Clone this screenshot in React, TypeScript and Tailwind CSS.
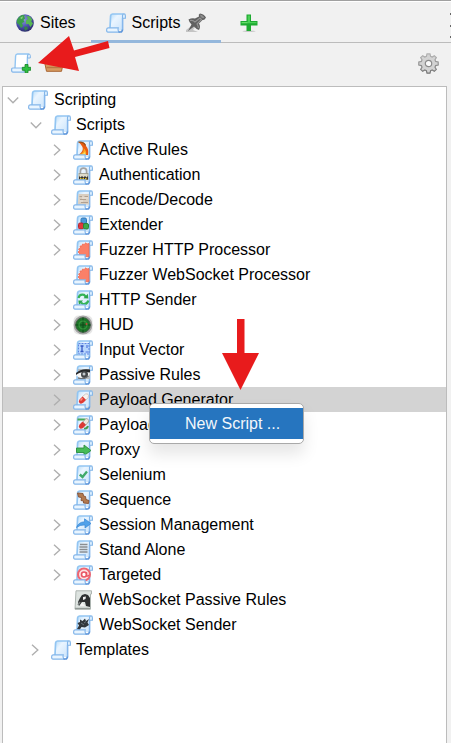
import { useState, type ReactNode } from "react";

/* A parchment scroll; children are painted on the sheet. */
function Scroll({ children }: { children?: ReactNode }) {
  return (
    <svg viewBox="0 0 20 20" className="size-5 shrink-0" aria-hidden="true">
      <defs>
        <linearGradient id="sheet" x1="0" y1="0" x2="1" y2="1">
          <stop offset="0" stopColor="#b4dbf9" />
          <stop offset="0.35" stopColor="#eaf5ff" />
          <stop offset="1" stopColor="#cbe4fb" />
        </linearGradient>
      </defs>
      <path d="M4 17L5 1H17V17Z" fill="url(#sheet)" />
      <path d="M4 15L4.6 2.8Q4.8 1 6.5 1H17.5" fill="none" stroke="#92c5f2" strokeWidth="1.7" />
      <path d="M16.5 5V2.6Q16.6 .9 18 .9Q19.4 .9 19.4 2.8V5.2H16.5" fill="#dff0fe" stroke="#82b5e8" strokeWidth="1.1" />
      <path d="M16.6 5V17.5" stroke="#86b7ec" strokeWidth="1.6" />
      {children}
      <path d="M2 14.9H12.2Q11.4 17.4 13 19.2H2Q.6 19.2 .6 17Q.6 14.9 2 14.9Z" fill="#e9f5ff" stroke="#84b6ea" strokeWidth="1.2" />
      <path d="M12.5 19.1H14.6Q16.3 19 16.4 16.6" fill="none" stroke="#5d95da" strokeWidth="1.5" />
    </svg>
  );
}

function Globe() {
  return (
    <svg viewBox="0 0 18 18" className="size-[18px]" aria-hidden="true">
      <defs>
        <radialGradient id="ocean" cx=".4" cy=".3" r=".7">
          <stop offset="0" stopColor="#93a0e0" />
          <stop offset=".6" stopColor="#4a51ad" />
          <stop offset="1" stopColor="#2d2d6e" />
        </radialGradient>
      </defs>
      <circle cx="9" cy="9" r="8.8" fill="url(#ocean)" />
      <path d="M1 6Q3 1.8 6.5 1L9 1.3 8 3 9.5 4 7.5 6 8.5 8 6 9 7 12 5 14 3 10.5.8 9Z" fill="#3c9d4b" />
      <path d="M10.5 2L14 2.5 16.5 6 15 7 17 9.5 14.5 13 12.5 10 10 10 10 6.5 12 5Z" fill="#58b652" />
      <path d="M8 13L11 12.5 12 15 9 16.8Z" fill="#35814a" />
      <path d="M4 4L7 2.3 6 5Z" fill="#91d783" />
    </svg>
  );
}

function Pin() {
  return (
    <svg viewBox="0 0 20 20" className="size-5" aria-hidden="true">
      <path d="M0 19V17L8 11 10 13 7 17 12 19Z" fill="#c4c4c4" />
      <path d="M2.500 6.500Q6 4.500 9 5.500L13 3.500Q12 1.500 14 .500 18 1 20 4.500 18.500 7.500 16.500 7L13 10.500Q15 13.500 13 17 10 16 8 13.500L2 18 5.500 11.500Q3 9 2.500 6.500Z" fill="#606060" />
      <path d="M4 7.500Q7 7 9 9L14 5 15.500 6.500 11 11Q12.500 13 12.300 15" fill="none" stroke="#949494" strokeWidth="1.2" />
      <path d="M14 1.500Q17.500 2 18.500 5L16.500 5.300Q14 4.300 14 1.500Z" fill="#8e8e8e" />
    </svg>
  );
}

function Plus() {
  return (
    <svg viewBox="0 0 18 18" className="size-[18px]" aria-hidden="true">
      <ellipse cx="9" cy="17.2" rx="6.500" ry=".8" fill="#c7c7c7" />
      <path d="M6.500.500H11V7H17.500V11.500H11V17H6.500V11.500H.500V7H6.500Z" fill="#1eaa31" />
      <path d="M7.700 1.500H10V8H16.500V9.300H7.700Z" fill="#4bd057" />
      <path d="M1.500 8H7.700V9.300H1.500Z" fill="#67dc6c" />
    </svg>
  );
}

function Gear() {
  return (
    <svg viewBox="0 0 21 21" className="size-[21px]" aria-hidden="true">
      <defs>
        <linearGradient id="steel" x1="0" y1="0" x2="0" y2="1">
          <stop offset="0" stopColor="#b4b4b4" />
          <stop offset="1" stopColor="#747474" />
        </linearGradient>
      </defs>
      <path
        d="M9 .8H12L12.6 3.400 14.200 4 16.300 2.700 18.300 4.700 17 6.800 17.600 8.400 20.200 9V12L17.600 12.600 17 14.200 18.300 16.300 16.300 18.300 14.200 17 12.600 17.600 12 20.200H9L8.400 17.600 6.800 17 4.700 18.300 2.700 16.300 4 14.200 3.400 12.600.8 12V9L3.400 8.400 4 6.800 2.700 4.700 4.700 2.700 6.800 4 8.400 3.400Z"
        fill="#d3d3d3" stroke="url(#steel)" strokeWidth="1.2"
      />
      <circle cx="10.500" cy="10.500" r="3.200" fill="#fafafa" stroke="#8b8b8b" strokeWidth="1.2" />
    </svg>
  );
}

function Folder() {
  return (
    <svg viewBox="0 0 20 20" className="size-5" aria-hidden="true">
      <path d="M2 5Q2 3 4 3H8L10 5H17V17H3Z" fill="#b87a46" />
      <path d="M4 7H16V12H4Z" fill="#f4e3cf" />
      <path d="M.7 9.5H19.3L17.5 18.3H2.5Z" fill="#d69a60" stroke="#a86532" />
      <path d="M2.5 14.5H17.5" stroke="#b87844" strokeWidth="1.4" />
      <path d="M2.5 11H17.5" stroke="#efc492" />
    </svg>
  );
}

function Radar() {
  return (
    <svg viewBox="0 0 20 20" className="size-5 shrink-0" aria-hidden="true">
      <rect x=".5" y=".5" width="19" height="19" rx="5" fill="#e6e6e6" />
      <circle cx="10" cy="10" r="8.400" fill="#1d7429" stroke="#a4a4a4" strokeWidth="2" />
      <circle cx="10" cy="10" r="7.400" fill="none" stroke="#4d5a4e" strokeWidth=".8" />
      <path d="M10 2.500V17.500M2.500 10H17.500" stroke="#0d4a18" strokeWidth="1" />
      <circle cx="10" cy="10" r="4" fill="none" stroke="#36983f" strokeWidth="1.2" />
      <circle cx="13.500" cy="9" r="1" fill="#c2473a" />
    </svg>
  );
}

function GreySheet() {
  return (
    <svg viewBox="0 0 20 20" className="size-5 shrink-0" aria-hidden="true">
      <path d="M3 .8H18.500V4H17.500V19.200H2Z" fill="#dde3e0" stroke="#adb5b1" />
      <path d="M7 8L9 5 12 4 15 5 17 8V17L13 16 12 12 9 12 6 16 5 12Z" fill="#2e3132" />
      <path d="M10 7L13 6.500 12.500 9 10 10Z" fill="#f0f0f0" />
      <path d="M9 12.500L12 16H7Z" fill="#f6f6f6" />
      <path d="M5 15L7 12" stroke="#7b8080" strokeWidth="1.5" />
      <path d="M2 18.500H17" stroke="#929a96" strokeWidth="1.4" />
    </svg>
  );
}

const art: Record<string, ReactNode> = {
  flame: (
    <>
      <path d="M5.500 2Q12.500 1.500 13 6Q16 9 15 15H5.500Q11 11 9.500 7Q8 4 5.500 2Z" fill="#ea5c13" />
      <path d="M10.500 8Q14 11 13 15H5.500Q12 12.500 10.500 8Z" fill="#fba823" />
      <path d="M7 14.500Q11 14 12 11.500L12.500 14.500Z" fill="#ffdf66" />
      <path d="M5.500 2.200Q11 1.500 12.500 5.500" fill="none" stroke="#94501c" strokeWidth="1.200" />
    </>
  ),
  lock: (
    <>
      <path d="M7.400 9V6Q7.400 3.200 10.500 3.200T13.600 6V9" fill="none" stroke="#a3a3a3" strokeWidth="1.700" />
      <rect x="6" y="8.500" width="9" height="6" fill="#dedbc9" stroke="#989889" strokeWidth=".8" />
      <path d="M6 11L7.500 12.500 9 11 10.500 12.500 12 11 13.500 12.500 15 11V14.500H6Z" fill="#353330" />
      <path d="M7 13.700H14.500" stroke="#e9c526" strokeWidth="1.500" strokeDasharray="1.5 1" />
    </>
  ),
  code: (
    <>
      <path d="M5.500 4H16V14.500H5Z" fill="#d9cec0" />
      <path d="M6.500 6.500H9M11.500 6.500H15M7 9.500H13M8 12.500H15" stroke="#b0a090" strokeWidth="1.200" />
      <path d="M9 8H15M6.500 11H10" stroke="#eee7de" />
    </>
  ),
  blocks: (
    <>
      <rect x="8" y="3" width="5.500" height="5.500" rx="1.500" fill="#4b98da" stroke="#2c74b7" />
      <rect x="5.500" y="8" width="5" height="6" rx="1.500" fill="#e0393c" stroke="#b02835" />
      <rect x="10.500" y="8.500" width="5" height="5.500" rx="1.500" fill="#3daa4c" stroke="#288537" />
    </>
  ),
  burst: (
    <path d="M16 3.500L14 4 12.500 2.800 11.500 4.500 9.500 4 9 6 7 6 7.500 8 5.500 9 6.500 10.500 5 12 6.500 13.500 5.500 15.500 16 17Z" fill="#fb8068" stroke="#f26b52" strokeWidth=".8" />
  ),
  cycle: (
    <>
      <path d="M5.500 8Q6.500 3.800 11 4.800L13 7" fill="none" stroke="#35b457" strokeWidth="2.300" />
      <path d="M10.500 8.200L15.300 8.500 14.800 3.700Z" fill="#2da64d" />
      <path d="M15.300 10.500Q14 15 9.500 13.800L8 12.500" fill="none" stroke="#35b457" strokeWidth="2.300" />
      <path d="M10 10.500L5.300 10.500 6 15Z" fill="#2da64d" />
    </>
  ),
  vector: (
    <>
      <rect x="5.500" y="3.500" width="10.500" height="10.500" fill="#b9d7fd" stroke="#5f85e2" strokeDasharray="2 1" />
      <path d="M7.500 6H10.500M9 6V11.500M7.500 11.500H10.500" stroke="#3558c4" strokeWidth="1.300" />
      <path d="M14 5V8M12.500 12H15" stroke="#537be0" strokeWidth="1.200" />
    </>
  ),
  eye: (
    <>
      <path d="M5 4H17V14H5Z" fill="#b5bbc0" />
      <path d="M3 9Q8 4 17 7Q17 10 14 13Q7 14 3 10Z" fill="#f6f6f6" />
      <path d="M3 8Q8 3 17 4.500V7.500Q8 5.500 3 10Z" fill="#26282a" />
      <circle cx="11.500" cy="9.600" r="3.500" fill="#45484b" />
      <circle cx="11" cy="9" r="1.500" fill="#c2c8cc" />
      <path d="M5 13Q11 15 15.500 11" fill="none" stroke="#6d7073" strokeWidth="1.200" />
    </>
  ),
  payload: (
    <>
      <path d="M9.500 6.500L12.500 4Q15 3 15.500 5.500Q16 7.500 13 10Z" fill="#f8f2ee" stroke="#c9beb6" strokeWidth=".8" />
      <path d="M6.500 9.500L9.500 6.500 13 10 10.500 12.500Q8 14.500 6.500 13Q5 11.500 6.500 9.500Z" fill="#e03a34" />
      <path d="M7.500 10.500L9.500 8.300" stroke="#fa9284" strokeWidth="1.500" />
    </>
  ),
  processor: (
    <>
      <path d="M4.500 4.500H12L15.500 7" fill="none" stroke="#48a854" strokeWidth="2.200" />
      <path d="M10 7L13 3.500Q15.500 3.500 16 6L13 10Z" fill="#efe6de" stroke="#a8a298" strokeWidth=".8" />
      <path d="M6.500 9.500L9.500 6.500 13 10 10 13Q7.500 14.500 6.500 13Q5 11.500 6.500 9.500Z" fill="#dc3a34" />
      <path d="M11 13.800Q14 14 15 11" fill="none" stroke="#459d50" strokeWidth="2" />
    </>
  ),
  proxy: (
    <path d="M3.500 8H11V5L18 10.500 11 15.500V12.500H3.500Z" fill="#47bc58" stroke="#2b8d3d" strokeWidth=".9" />
  ),
  check: <path d="M6.800 9.500L9.500 12 14 6.500" fill="none" stroke="#40a96a" strokeWidth="2.400" />,
  steps: (
    <path d="M4.500 3L10 3.500 10.500 6 12.500 6.500 13 9.500 16 10.500 15.500 13.500 10.500 13 10.500 11 8 10.500 8.500 7.500 5.500 7Z" fill="#b27a50" stroke="#865032" strokeWidth=".9" />
  ),
  share: (
    <path d="M3.500 12.500Q5.500 7 11.500 6.800V3.800L18 8.500 12 13V10Q7 9.500 3.500 12.500Z" fill="#50a1ea" stroke="#3886d3" strokeWidth=".7" />
  ),
  lines: <path d="M7 4.500H14.500M6.500 7H14.500M6.500 9.500H14.500M6.500 12H14.500" stroke="#898d91" strokeWidth="1.300" />,
  target: (
    <>
      <circle cx="11" cy="9.500" r="6" fill="#fde0e2" stroke="#ef6671" strokeWidth="2" />
      <circle cx="11" cy="9.500" r="2.500" fill="#fff" stroke="#e95564" strokeWidth="1.600" />
      <path d="M13.500 7V10.500Q14.500 12 16 10" fill="none" stroke="#e95564" strokeWidth="1.400" />
    </>
  ),
  plug: (
    <>
      <path d="M4 14L6 10.500 4.500 8 7 7 7 4.500 9.500 6 12 3.500 13 6 16 4 14.500 7.500 16 10 12 12.500 8.500 12 6.500 15Z" fill="#32383d" />
      <path d="M8 8L11 10M13 6.500L11 8" stroke="#69737b" />
    </>
  ),
};

function Chevron({ open }: { open: boolean }) {
  return (
    <svg viewBox="0 0 12 12" className="size-3" fill="none" stroke="#afafaf" strokeWidth="1.4" aria-hidden="true">
      {open ? <path d="M.8 3.500L6 8.800 11.200 3.500" /> : <path d="M2 .8L7.800 6 2 11.200" />}
    </svg>
  );
}

function Toggle({ open, label, onClick }: { open: boolean; label: string; onClick?: () => void }) {
  return (
    <button type="button" aria-label={`Toggle ${label}`} aria-expanded={open} onClick={onClick} className="flex w-3 shrink-0">
      <Chevron open={open} />
    </button>
  );
}

type Item = { label: string; icon: string; leaf?: boolean };

const items: Item[] = [
  { label: "Active Rules", icon: "flame" },
  { label: "Authentication", icon: "lock" },
  { label: "Encode/Decode", icon: "code" },
  { label: "Extender", icon: "blocks" },
  { label: "Fuzzer HTTP Processor", icon: "burst" },
  { label: "Fuzzer WebSocket Processor", icon: "burst", leaf: true },
  { label: "HTTP Sender", icon: "cycle" },
  { label: "HUD", icon: "radar" },
  { label: "Input Vector", icon: "vector" },
  { label: "Passive Rules", icon: "eye" },
  { label: "Payload Generator", icon: "payload" },
  { label: "Payload Processor", icon: "processor" },
  { label: "Proxy", icon: "proxy" },
  { label: "Selenium", icon: "check" },
  { label: "Sequence", icon: "steps", leaf: true },
  { label: "Session Management", icon: "share" },
  { label: "Stand Alone", icon: "lines" },
  { label: "Targeted", icon: "target" },
  { label: "WebSocket Passive Rules", icon: "sheet", leaf: true },
  { label: "WebSocket Sender", icon: "plug", leaf: true },
];

function ItemIcon({ name }: { name: string }) {
  if (name === "radar") return <Radar />;
  if (name === "sheet") return <GreySheet />;
  return <Scroll>{art[name]}</Scroll>;
}

function ContextMenu() {
  return (
    <div role="menu" className="absolute top-4 left-[146px] z-10 w-[155px] rounded-[5px] border border-[#a9a9a9] bg-white py-1 shadow-[0_10px_16px_0_rgba(0,0,0,0.1)]">
      <button type="button" role="menuitem" className="block h-[31px] w-full bg-[#2675bf] pl-[35px] text-left text-[#f3f7fb]">
        New Script ...
      </button>
    </div>
  );
}

function DownArrow() {
  return (
    <svg viewBox="0 0 38 72" className="pointer-events-none absolute -top-[68px] left-[218px] z-20 h-[72px] w-[38px]" aria-hidden="true">
      <path d="M16 0H23.500V34H38L19.500 71 1 34H16Z" fill="#e81b1c" />
    </svg>
  );
}

function SideArrow() {
  return (
    <svg viewBox="0 0 74 38" className="pointer-events-none absolute -top-[18px] left-[27px] z-20 h-[38px] w-[74px]" aria-hidden="true">
      <path d="M0 28L31 1 36 15.500 70 6 71.500 13 37 22 41 36Z" fill="#e81b1c" />
    </svg>
  );
}

export default function App() {
  const [rootOpen, setRootOpen] = useState(true);
  const [scriptsOpen, setScriptsOpen] = useState(true);
  const [selected, setSelected] = useState("Payload Generator");

  return (
    <main className="flex min-h-screen flex-col overflow-hidden border-t border-[#a0a0a0] bg-[#f1f1f1] font-['Liberation_Sans',Arial,sans-serif] text-base text-black">
      <div className="flex h-[42px] items-stretch justify-between border-t border-b border-t-white border-b-[#bcbcbc]">
        <div role="tablist" className="flex items-stretch">
          <button type="button" role="tab" aria-selected="false" className="flex items-center gap-1.5 pt-px pr-[15px] pl-4">
            <Globe />
            Sites
          </button>
          <button type="button" role="tab" aria-selected="true" className="-mb-px flex items-center gap-1.5 border-b-[3px] border-[#94b7dc] px-[15px] pt-[3px]">
            <Scroll />
            Scripts
            <Pin />
          </button>
          <button type="button" aria-label="Add tab" className="flex items-center px-[19px] pt-px">
            <Plus />
          </button>
        </div>
        <button type="button" aria-label="More tabs" className="flex w-px flex-col items-center justify-between overflow-hidden pt-[11px] pb-1">
          <span className="h-0.5 w-px bg-[#686868]" />
          <span className="h-0.5 w-px bg-[#686868]" />
          <span className="h-0.5 w-px bg-[#686868]" />
        </button>
      </div>

      <div className="flex h-[43px] items-center justify-between pr-3 pb-[3px] pl-[11px]">
        <div className="flex items-center gap-[13px]">
          <button type="button" aria-label="New script" className="relative">
            <svg viewBox="0 0 20 20" className="size-5" aria-hidden="true">
              <path d="M4 15L4.600 3Q4.800 1 6.500 1H17Q16 3 16.500 16H4Z" fill="#fff" stroke="#92c5f2" strokeWidth="1.400" />
              <path d="M16.500 5H19.300V2.500Q19.300 1 17.800 1Q16.500 1 16.500 5Z" fill="#e8f4fd" stroke="#82b5e8" />
              <path d="M2 15H13V19.200H2Q.6 19.200.6 17T2 15Z" fill="#e9f5ff" stroke="#84b6ea" strokeWidth="1.200" />
              <path d="M14 11.500H17V14.300H19.700V17.300H17V19.800H14V17.300H11.300V14.300H14Z" fill="#2fc042" stroke="#118322" strokeWidth=".8" />
            </svg>
            <SideArrow />
          </button>
          <button type="button" aria-label="Load script"><Folder /></button>
        </div>
        <button type="button" aria-label="Options"><Gear /></button>
      </div>

      <div role="tree" aria-label="Scripts" className="mr-1 ml-0.5 flex-1 border-x border-t border-[#bcbcbc] bg-white">
        <div role="treeitem" aria-expanded={rootOpen} className="flex h-[25px] items-center gap-[9px] pl-1">
          <Toggle open={rootOpen} label="Scripting" onClick={() => setRootOpen(!rootOpen)} />
          <span className="flex items-center gap-1.5"><Scroll />Scripting</span>
        </div>
        {rootOpen && (
          <div role="group">
            <div role="treeitem" aria-expanded={scriptsOpen} className="flex h-[25px] items-center gap-[9px] pl-[27px]">
              <Toggle open={scriptsOpen} label="Scripts" onClick={() => setScriptsOpen(!scriptsOpen)} />
              <span className="flex items-center gap-[5px]"><Scroll />Scripts</span>
            </div>
            {scriptsOpen && items.map(({ label, icon, leaf }) => (
              <div
                key={label}
                role="treeitem"
                aria-selected={selected === label}
                onClick={() => setSelected(label)}
                className={`relative flex h-[25px] items-center gap-[9px] pl-[49px] ${selected === label ? "bg-[#d3d3d3]" : ""}`}
              >
                {leaf ? <span className="w-3 shrink-0" /> : <Toggle open={false} label={label} />}
                <span className="flex items-center gap-1.5 whitespace-nowrap"><ItemIcon name={icon} />{label}</span>
                {label === "Payload Generator" && (
                  <>
                    <ContextMenu />
                    <DownArrow />
                  </>
                )}
              </div>
            ))}
            <div role="treeitem" className="flex h-[25px] items-center gap-[9px] pl-[27px]">
              <Toggle open={false} label="Templates" />
              <span className="flex items-center gap-[5px]"><Scroll />Templates</span>
            </div>
          </div>
        )}
      </div>
    </main>
  );
}
